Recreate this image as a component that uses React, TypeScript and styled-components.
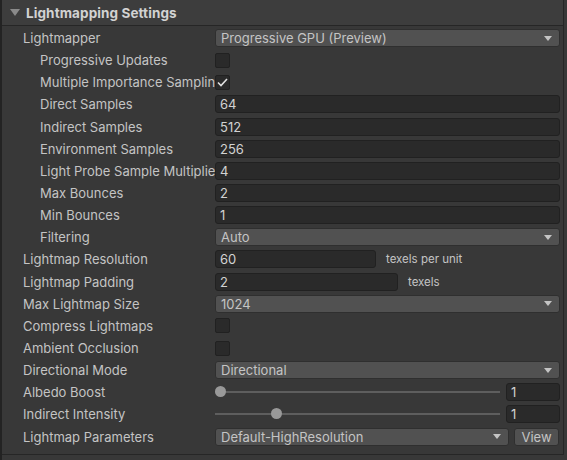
import styled, { createGlobalStyle } from "styled-components"

const GlobalStyle = createGlobalStyle`
  body {
    margin: 0;
    background-color: #383838;
    font-family: Inter, "Liberation Sans", sans-serif;
  }
`

const Panel = styled.div`
  width: 567px;
  height: 460px;
  box-sizing: border-box;
  background-color: #383838;
  border-left: 2px solid #232323;
  display: flex;
  flex-direction: column;
  overflow: hidden;
`
const Header = styled.div`
  height: 25px;
  display: flex;
  align-items: center;
  gap: 6px;
  padding-left: 8px;
  background-color: #3d3d3d;
  border-bottom: 1px solid #262626;
  border-right: 1px solid #262626;
  margin-right: 3px;
`
const Title = styled.span`
  color: #d2d2d2;
  font-size: 13.5px;
  font-weight: 700;
  letter-spacing: 0.1px;
`
const Body = styled.div`
  flex: 1;
  display: flex;
  flex-direction: column;
  padding-top: 1px;
  border-right: 1px solid #262626;
  margin-right: 3px;
  border-bottom: 1px solid #262626;
  margin-bottom: 5px;
`
const Row = styled.div`
  height: 22.15px;
  display: flex;
  align-items: center;
  padding-right: 3px;
`
const Label = styled.div<{ indent?: boolean }>`
  width: ${props => (props.indent ? 175 : 192)}px;
  padding-left: ${props => (props.indent ? 38 : 21)}px;
  flex-shrink: 0;
  color: #c4c4c4;
  font-size: 13px;
  white-space: nowrap;
  overflow: hidden;
`
const Dropdown = styled.div<{ width?: number }>`
  ${props => (props.width ? `width: ${props.width}px;` : "flex: 1;")}
  height: 18px;
  box-sizing: border-box;
  display: flex;
  align-items: center;
  justify-content: space-between;
  padding: 0 7px 0 5px;
  background-color: #515151;
  border: 1px solid #2f2f2f;
  border-radius: 3px;
  color: #c4c4c4;
  font-size: 13px;
`
const Arrow = styled.span`
  width: 0;
  height: 0;
  border-left: 4px solid transparent;
  border-right: 4px solid transparent;
  border-top: 5px solid #c4c4c4;
`
const Field = styled.div<{ width?: number }>`
  ${props => (props.width ? `width: ${props.width}px;` : "flex: 1;")}
  height: 18px;
  box-sizing: border-box;
  display: flex;
  align-items: center;
  padding-left: 4px;
  background-color: #2a2a2a;
  border: 1px solid #212121;
  border-radius: 3px;
  color: #d2d2d2;
  font-size: 13px;
`
const Unit = styled.span`
  margin-left: 10px;
  color: #c4c4c4;
  font-size: 11.5px;
`
const Checkbox = styled.div`
  width: 15px;
  height: 15px;
  box-sizing: border-box;
  display: flex;
  align-items: center;
  justify-content: center;
  background-color: #2a2a2a;
  border: 1px solid #212121;
  border-radius: 2px;
`
const SliderTrack = styled.div`
  flex: 1;
  height: 12px;
  position: relative;
  margin-right: 6px;
  &::before {
    content: "";
    position: absolute;
    left: 0;
    right: 0;
    top: 5px;
    height: 2px;
    background-color: #5e5e5e;
  }
`
const Thumb = styled.div<{ at: number }>`
  position: absolute;
  top: 0;
  left: ${props => props.at}px;
  width: 11px;
  height: 11px;
  border-radius: 50%;
  background-color: #999999;
`
const Button = styled.div`
  margin-left: 5px;
  width: 45px;
  height: 18px;
  box-sizing: border-box;
  display: flex;
  align-items: center;
  justify-content: center;
  background-color: #515151;
  border: 1px solid #2f2f2f;
  border-radius: 3px;
  color: #c4c4c4;
  font-size: 13px;
`

const Fold = () => (
  <svg width="10" height="8" viewBox="0 0 10 8">
    <polygon points="0,0 10,0 5,7" fill="#8a8a8a" />
  </svg>
)

const Check = () => (
  <svg width="11" height="9" viewBox="0 0 11 9">
    <polyline
      points="1,4.5 4,7.5 10,1"
      fill="none"
      stroke="#e0e0e0"
      strokeWidth="1.6"
    />
  </svg>
)

const DropRow = ({ label, value, indent }: { label: string; value: string; indent?: boolean }) => (
  <Row>
    <Label indent={indent}>{label}</Label>
    <Dropdown>
      {value}
      <Arrow />
    </Dropdown>
  </Row>
)

const NumRow = ({ label, value }: { label: string; value: string }) => (
  <Row>
    <Label indent>{label}</Label>
    <Field>{value}</Field>
  </Row>
)

const CheckRow = ({ label, checked, indent }: { label: string; checked?: boolean; indent?: boolean }) => (
  <Row>
    <Label indent={indent}>{label}</Label>
    <Checkbox>{checked && <Check />}</Checkbox>
  </Row>
)

const SliderRow = ({ label, at }: { label: string; at: number }) => (
  <Row>
    <Label>{label}</Label>
    <SliderTrack>
      <Thumb at={at} />
    </SliderTrack>
    <Field width={54}>1</Field>
  </Row>
)

const App = () => {
  return (
    <>
      <GlobalStyle />
      <Panel>
        <Header>
          <Fold />
          <Title>Lightmapping Settings</Title>
        </Header>
        <Body>
          <DropRow label="Lightmapper" value="Progressive GPU (Preview)" />
          <CheckRow label="Progressive Updates" indent />
          <CheckRow label="Multiple Importance Sampling" indent checked />
          <NumRow label="Direct Samples" value="64" />
          <NumRow label="Indirect Samples" value="512" />
          <NumRow label="Environment Samples" value="256" />
          <NumRow label="Light Probe Sample Multiplier" value="4" />
          <NumRow label="Max Bounces" value="2" />
          <NumRow label="Min Bounces" value="1" />
          <DropRow label="Filtering" value="Auto" indent />
          <Row>
            <Label>Lightmap Resolution</Label>
            <Field width={161}>60</Field>
            <Unit>texels per unit</Unit>
          </Row>
          <Row>
            <Label>Lightmap Padding</Label>
            <Field width={183}>2</Field>
            <Unit>texels</Unit>
          </Row>
          <DropRow label="Max Lightmap Size" value="1024" />
          <CheckRow label="Compress Lightmaps" />
          <CheckRow label="Ambient Occlusion" />
          <DropRow label="Directional Mode" value="Directional" />
          <SliderRow label="Albedo Boost" at={0} />
          <SliderRow label="Indirect Intensity" at={56} />
          <Row>
            <Label>Lightmap Parameters</Label>
            <Dropdown width={294}>
              Default-HighResolution
              <Arrow />
            </Dropdown>
            <Button>View</Button>
          </Row>
        </Body>
      </Panel>
    </>
  )
}

export default App
